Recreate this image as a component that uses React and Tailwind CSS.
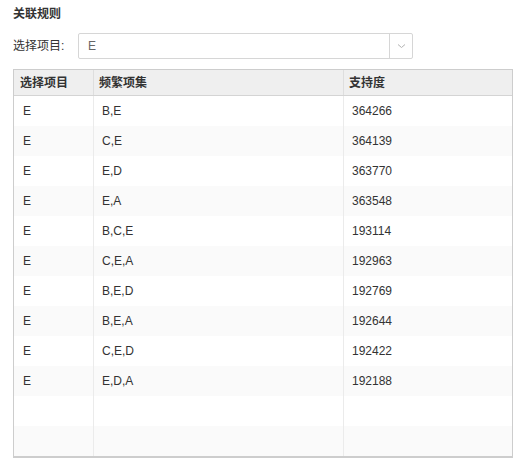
import React from "react";

const rows = [
  ["E", "B,E", "364266"],
  ["E", "C,E", "364139"],
  ["E", "E,D", "363770"],
  ["E", "E,A", "363548"],
  ["E", "B,C,E", "193114"],
  ["E", "C,E,A", "192963"],
  ["E", "B,E,D", "192769"],
  ["E", "B,E,A", "192644"],
  ["E", "C,E,D", "192422"],
  ["E", "E,D,A", "192188"],
  ["", "", ""],
  ["", "", ""],
];

const App = () => {
  return (
    <div className="min-h-[463px] w-[521px] bg-white px-[13px] pt-[6px] text-[12px] text-[#333] font-['Liberation_Sans','Noto_Sans_CJK_SC',sans-serif]">
      <div className="h-[16px] leading-[16px] font-bold">关联规则</div>

      <div className="mt-[11px] flex items-center">
        <span className="w-[65px] leading-[16px]">选择项目:</span>
        <div className="flex h-[26px] w-[335px] items-stretch rounded-[2px] border border-[#d6d6d6] bg-white">
          <div className="flex flex-1 items-center pl-[9px] text-[#666]">E</div>
          <div className="flex w-[23px] items-center justify-center border-l border-[#d6d6d6]">
            <svg width="9" height="6" viewBox="0 0 9 6" fill="none">
              <path d="M1 1.5 L4.5 4.5 L8 1.5" stroke="#b3b3b3" strokeWidth="1" />
            </svg>
          </div>
        </div>
      </div>

      <div className="mt-[10px] w-[500px] border border-b-2 border-[#cdcdcd]">
        <div className="grid h-[26px] grid-cols-[79px_250px_169px] border-b border-[#d4d4d4] bg-[#efefef] font-bold">
          <div className="flex items-center pl-[6px]">选择项目</div>
          <div className="flex items-center border-l border-[#dedede] pl-[5px]">频繁项集</div>
          <div className="flex items-center border-l border-[#dedede] pl-[5px]">支持度</div>
        </div>
        {rows.map((r, i) => (
          <div
            key={i}
            className={
              "grid h-[30px] grid-cols-[79px_250px_169px] " +
              (i % 2 === 1 ? "bg-[#fafafa]" : "bg-white")
            }
          >
            <div className="flex items-center pl-[9px]">{r[0]}</div>
            <div className="flex items-center border-l border-[#ebebeb] pl-[8px]">{r[1]}</div>
            <div className="flex items-center border-l border-[#ebebeb] pl-[8px]">{r[2]}</div>
          </div>
        ))}
      </div>
    </div>
  );
};

export default App;
